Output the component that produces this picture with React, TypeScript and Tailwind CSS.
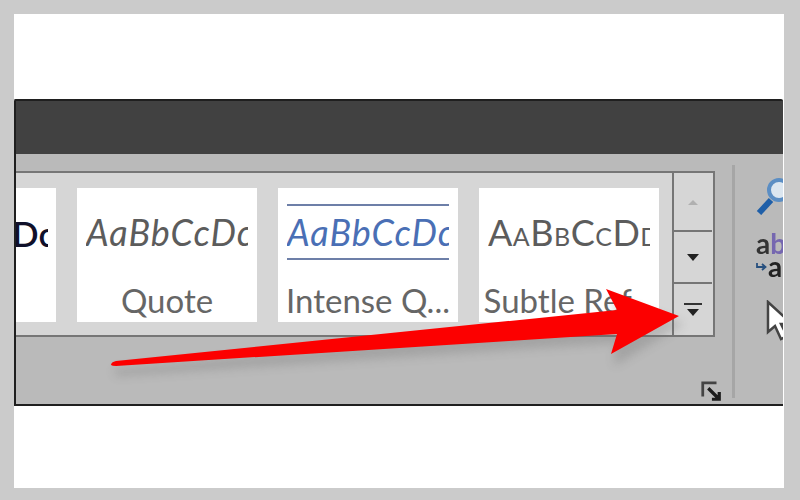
import React from "react";

function Card({ sample, label, italic, blue, small, lines }: { sample: React.ReactNode; label: string; italic?: boolean; blue?: boolean; small?: boolean; lines?: boolean }) {
  return (
    <div className="w-[180px] h-[134px] shrink-0 bg-white flex flex-col items-center overflow-hidden">
      <div className={`w-[162px] h-[56px] mt-[16px] flex items-center overflow-hidden whitespace-nowrap text-[36px] leading-none ${lines ? "border-y-2 border-[#6d7fa8]" : ""} ${italic ? "italic" : ""} ${blue ? "text-[#4a6fb5]" : "text-[#5c5c5c]"} ${small ? "[font-variant-caps:small-caps] tracking-[0.5px]" : "tracking-[1px]"}`}>
        {sample}
      </div>
      <div className="mt-[21px] text-[33px] leading-[38px] text-[#666] whitespace-nowrap">{label}</div>
    </div>
  );
}

function ScrollBtn({ children, className }: { children: React.ReactNode; className: string }) {
  return <div className={`w-[38px] flex flex-col items-center justify-center bg-[#d6d6d6] ${className}`}>{children}</div>;
}

export default function App() {
  return (
    <div className="w-[800px] h-[500px] bg-[#cbcbcb] p-[14px_16px_12px_14px] overflow-hidden relative" style={{ fontFamily: 'Lato, "Noto Sans", sans-serif' }}>
      <div className="w-[770px] h-[474px] bg-white pt-[85px]">
        <div className="w-[769px] h-[307px] border-l-2 border-b-2 border-t-2 border-[#1f1f1f] rounded-t-[2px] flex flex-col overflow-hidden bg-[#bababa]">
          <div className="h-[53px] shrink-0 bg-[#414141]" />
          <div className="flex-1 flex pt-[17px] blur-[0.6px]">
            <div className="w-[699px] h-[166px] shrink-0 flex flex-col">
              <div className="h-[166px] flex bg-[#d6d6d6] border-y-2 border-r-2 border-[#767676]">
                <div className="flex gap-[21px] w-[655px] shrink-0 overflow-hidden pt-[15px] pr-[1px]">
                  <div className="w-[40px] h-[134px] shrink-0 bg-white overflow-hidden">
                    <div className="w-[32px] overflow-hidden">
                      <div className="mt-[28px] text-[35px] leading-none font-semibold text-[#10102a] whitespace-nowrap -ml-[4px]">Dc</div>
                    </div>
                  </div>
                  <Card sample="AaBbCcDc" label="Quote" italic />
                  <Card sample="AaBbCcDc" label="Intense Q..." italic blue lines />
                  <Card sample="AaBbCcDd" label="Subtle Ref..." small />
                </div>
                <div className="flex flex-col border-l-2 border-[#767676] ml-[1px]">
                  <ScrollBtn className="h-[57px]">
                    <svg width="12" height="8" viewBox="0 0 12 8"><path d="M1 7 L6 2 L11 7Z" fill="#b0b0b0" /></svg>
                  </ScrollBtn>
                  <ScrollBtn className="h-[52px] border-t-2 border-[#767676]">
                    <svg width="14" height="9" viewBox="0 0 14 9"><path d="M1 1 H13 L7 8Z" fill="#222" /></svg>
                  </ScrollBtn>
                  <ScrollBtn className="h-[53px] border-t-2 border-[#767676] gap-[3px]">
                    <div className="w-[18px] h-[2px] bg-[#333]" />
                    <svg width="14" height="9" viewBox="0 0 14 9"><path d="M1 1 H13 L7 8Z" fill="#222" /></svg>
                  </ScrollBtn>
                </div>
              </div>
              <div className="flex justify-end pt-[43px]">
                <svg width="22" height="22" viewBox="0 0 24 24" className="-mr-[7px]" fill="none">
                  <path d="M3 18 V3 H18" stroke="#444" strokeWidth="3" />
                  <path d="M9 9 L21 21 M21 13 V21 H13" stroke="#1c1c1c" strokeWidth="3.5" />
                </svg>
              </div>
            </div>
            <div className="w-[3px] h-[233px] -mt-[6px] ml-[17px] bg-[#a6a6a6] shrink-0" />
            <div className="flex-1 flex flex-col overflow-hidden pl-[21px] min-w-0">
              <svg width="32" height="38" viewBox="0 0 32 38" className="shrink-0 mt-[6px]" fill="none">
                <path d="M3 36 L15 23" stroke="#1f5fa8" strokeWidth="6" />
                <circle cx="23" cy="13" r="10" stroke="#5b8ec4" strokeWidth="4" fill="#dbe6f0" />
              </svg>
              <div className="mt-[14px] whitespace-nowrap text-[28px] leading-[28px] text-[#333] font-bold">a<span className="text-[#7567b0]">b</span></div>
              <div className="flex items-center gap-[1px]">
                <svg width="11" height="10" viewBox="0 0 11 10" className="shrink-0" fill="none"><path d="M1 2 V6 H9 M6 3 L9.500 6 L6 9" stroke="#27507f" strokeWidth="1.800" /></svg>
                <div className="whitespace-nowrap text-[28px] leading-[18px] text-[#222] font-bold">a</div>
              </div>
              <svg width="30" height="42" viewBox="0 0 30 42" className="shrink-0 mt-[25px] ml-[10px]">
                <path d="M2 2 V32 L9 26 L15 39 L21 36 L15 24 L26 24 Z" fill="#fff" stroke="#444" strokeWidth="2.500" />
              </svg>
            </div>
          </div>
        </div>
      </div>
      <svg className="absolute left-0 top-0 pointer-events-none" width="800" height="500" viewBox="0 0 800 500">
        <defs>
          <filter id="sh" x="-10%" y="-50%" width="120%" height="200%"><feGaussianBlur stdDeviation="5" /></filter>
          <filter id="sf" x="-5%" y="-5%" width="110%" height="110%"><feGaussianBlur stdDeviation="0.7" /></filter>
        </defs>
        <path d="M112 368 L612 335 L610 358 L680 316 L606 290 L616 312 L110 361 Z" fill="#6a6a6a" opacity="0.28" filter="url(#sh)" transform="translate(4 8)" />
        <path d="M111 365 Q111 362 116 361 L617 310 L606 289 L679 316 L611 354 L617 334 L116 366 Q112 366 111 365 Z" fill="#fc0000" filter="url(#sf)" />
      </svg>
    </div>
  );
}
